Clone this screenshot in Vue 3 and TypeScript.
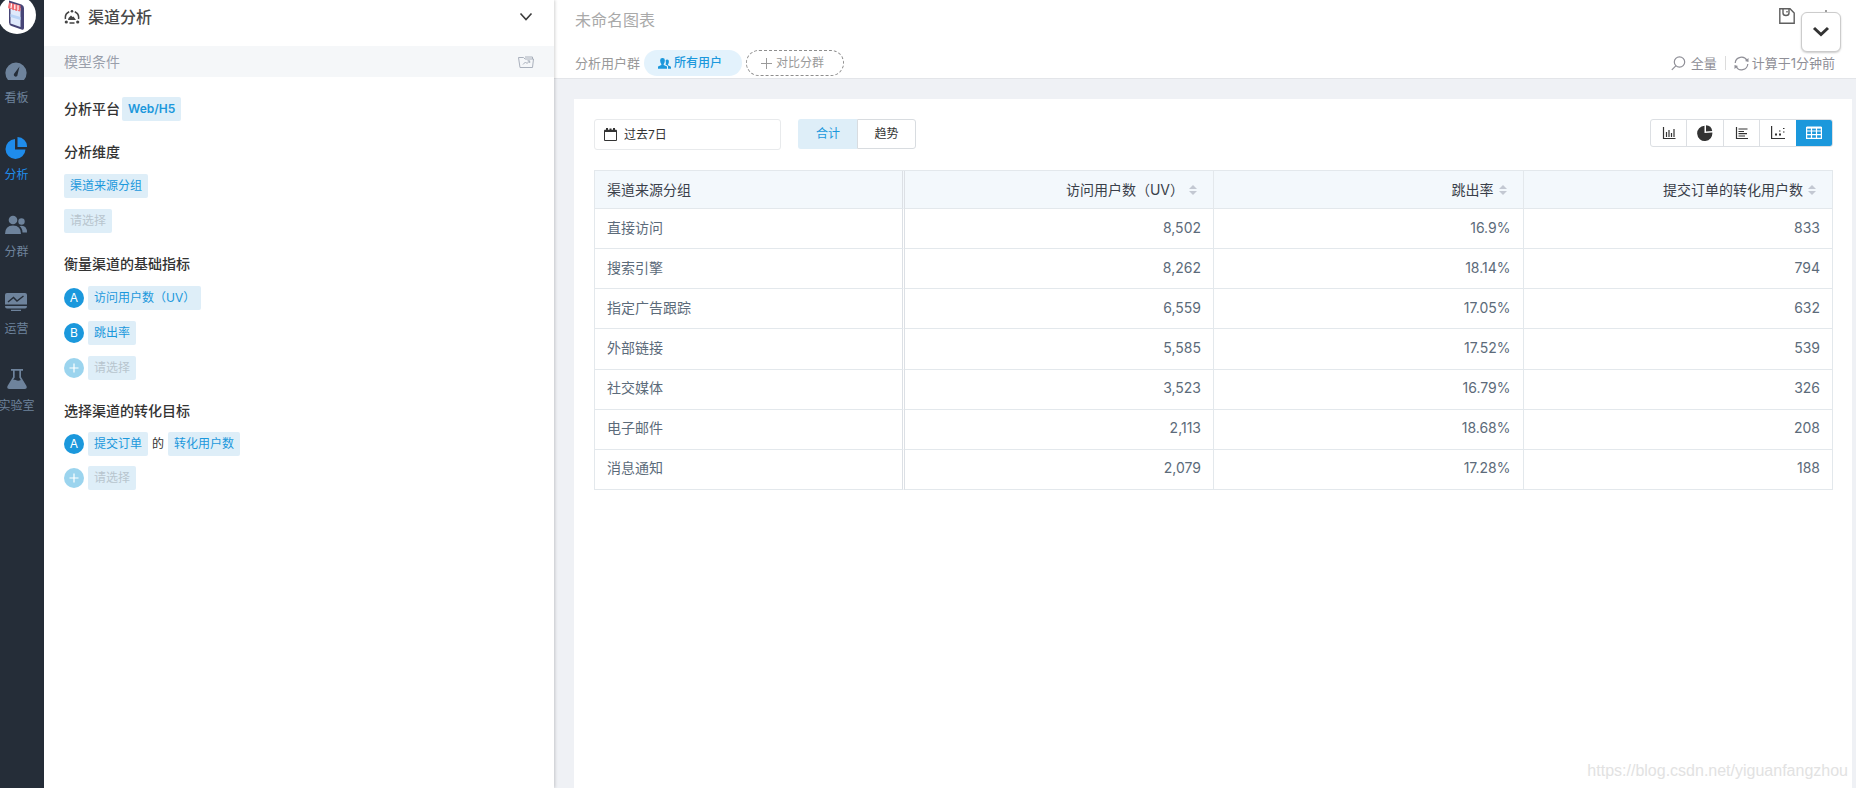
<script setup lang="ts">
import { ref } from 'vue'

type Chip = { text: string; muted?: boolean }
type Line = { badge?: string; add?: boolean; chips: Chip[] }
type Section = { title: string; lines: Line[] }

const navItems = [
  { key: 'board', label: '看板' },
  { key: 'analysis', label: '分析' },
  { key: 'groups', label: '分群' },
  { key: 'operate', label: '运营' },
  { key: 'lab', label: '实验室' },
]
const activeNav = ref('analysis')

const sections: Section[] = [
  {
    title: '分析维度',
    lines: [
      { chips: [{ text: '渠道来源分组' }] },
      { chips: [{ text: '请选择', muted: true }] },
    ],
  },
  {
    title: '衡量渠道的基础指标',
    lines: [
      { badge: 'A', chips: [{ text: '访问用户数（UV）' }] },
      { badge: 'B', chips: [{ text: '跳出率' }] },
      { add: true, chips: [{ text: '请选择', muted: true }] },
    ],
  },
  {
    title: '选择渠道的转化目标',
    lines: [
      { badge: 'A', chips: [{ text: '提交订单' }, { text: '转化用户数' }] },
      { add: true, chips: [{ text: '请选择', muted: true }] },
    ],
  },
]

const mode = ref<'total' | 'trend'>('total')
const chart = ref('table')
const charts = [
  { key: 'bar', label: '柱状图' },
  { key: 'pie', label: '饼图' },
  { key: 'hbar', label: '条形图' },
  { key: 'scatter', label: '散点图' },
  { key: 'table', label: '表格' },
]

const metrics = ['访问用户数（UV）', '跳出率', '提交订单的转化用户数']
const rows = [
  ['直接访问', '8,502', '16.9%', '833'],
  ['搜索引擎', '8,262', '18.14%', '794'],
  ['指定广告跟踪', '6,559', '17.05%', '632'],
  ['外部链接', '5,585', '17.52%', '539'],
  ['社交媒体', '3,523', '16.79%', '326'],
  ['电子邮件', '2,113', '18.68%', '208'],
  ['消息通知', '2,079', '17.28%', '188'],
]
</script>

<template>
  <div class="app">
    <nav class="rail">
      <a class="avatar" href="#" aria-label="首页">
        <svg width="38" height="38" viewBox="0 0 38 38">
          <circle cx="19" cy="19" r="19" fill="#fff" />
          <path d="M11 4.500 L23.500 8.500 Q26 9.500 26 12 V32 Q26 34.500 23.500 33.500 L13.500 30 Q11 29 11 26.500Z" fill="#474577" />
          <path d="M12.500 9 L22.500 12 V31 L12.500 27.500Z" fill="#dfe9fb" />
          <path d="M12.500 18 L22.500 21 V24 L12.500 21Z" fill="#b9d3f6" />
          <path d="M11 6.500 L22.500 9.500 V14.500 Q21 16.500 19.500 14 Q18 16 16.500 13.500 Q15 15.500 13.500 12.500 Q11.500 14 10 11.500Z" fill="#ef6a70" />
          <path d="M13.500 7.500 L13 12 M16.800 8.500 V13 M20 9.300 V14" stroke="#fff" stroke-width="1.200" />
        </svg>
      </a>
      <a
        v-for="n in navItems"
        :key="n.key"
        href="#"
        class="nav-item"
        :class="{ active: activeNav === n.key }"
        @click.prevent="activeNav = n.key"
      >
        <svg width="22" height="22" viewBox="0 0 22 22" fill="currentColor" aria-hidden="true">
          <template v-if="n.key === 'board'">
            <path d="M3 20 A10.600 10.600 0 1 1 19 20Z" />
            <path d="M14.500 6.500 L12.600 14.600 A1.900 1.900 0 1 1 9.300 13.500Z" fill="#252d38" />
          </template>
          <template v-else-if="n.key === 'analysis'">
            <path d="M10 2 V12.500 H20.500 A10 10 0 1 1 10 2Z" />
            <path d="M12.500 0 A9.500 9.500 0 0 1 22 10 H12.500Z" />
          </template>
          <template v-else-if="n.key === 'groups'">
            <circle cx="8" cy="6" r="4.300" />
            <path d="M0 20 Q0 11.500 8 11.500 Q16 11.500 16 20Z" />
            <circle cx="16.500" cy="7.500" r="3.200" />
            <path d="M14.500 12 Q22 10.500 22 18.500 H17.500 Q17.500 14.500 14.500 12Z" />
          </template>
          <template v-else-if="n.key === 'operate'">
            <path d="M2 2 H20 Q22 2 22 4 V13.500 H0 V4 Q0 2 2 2Z" />
            <path d="M3 11 L8.500 6.500 L12 10 L18.500 5" fill="none" stroke="#252d38" stroke-width="1.400" />
            <path d="M0 15 H22 Q22 17.500 20 17.500 H2 Q0 17.500 0 15Z M6 18.800 H16 V20 H6Z" />
          </template>
          <template v-else>
            <path d="M5 1 H17 V2.800 H15 V9 L20.500 18 Q21.500 21 18.500 21 H3.500 Q0.500 21 1.500 18 L7 9 V2.800 H5Z" />
            <path d="M8.700 2.800 H13.300 V9.500 L14.800 12 Q12 13.500 9.800 12 Q8.500 11.500 7.200 12 L8.700 9.500Z" fill="#252d38" />
          </template>
        </svg>
        <span>{{ n.label }}</span>
      </a>
    </nav>

    <aside class="panel">
      <header class="panel-head">
        <svg width="16" height="16" viewBox="0 0 16 16" aria-hidden="true">
          <path d="M1.500 10 A6.600 6.600 0 0 1 5.200 2.800 M10.800 2.800 A6.600 6.600 0 0 1 14.500 10 M5.500 14 H10.500" fill="none" stroke="#444" stroke-width="1.500" />
          <circle cx="8" cy="2.200" r="1.300" fill="#444" />
          <circle cx="2.300" cy="13" r="1.600" fill="#444" />
          <circle cx="13.700" cy="13" r="1.600" fill="#444" />
          <path d="M4 11 L4.500 9 L7 6.500 L8.500 8 L9.500 7.500 L12 11Z" fill="#444" />
        </svg>
        <h1>渠道分析</h1>
        <button class="plain" type="button" aria-label="收起">
          <svg width="14" height="10" viewBox="0 0 14 10"><path d="M1.500 1.500 L7 7.500 L12.500 1.500" fill="none" stroke="#3c3c3c" stroke-width="1.600" /></svg>
        </button>
      </header>
      <div class="subbar">
        <span>模型条件</span>
        <button class="plain" type="button" aria-label="保存模型">
          <svg width="16" height="12" viewBox="0 0 16 12" fill="none" stroke="#a9b0bc" stroke-width="1">
            <path d="M2 11.500 L0.500 1.500 H5.500 L7 3 H15.500 L14.500 11.500Z M7 1 H14.500 V3 M5 8.500 L7.500 6 L9 7.500 L11.500 5 M9.500 4.800 H11.700 V7" />
          </svg>
        </button>
      </div>
      <div class="conditions">
        <div class="platform">
          <h2>分析平台</h2>
          <button class="chip strong" type="button">Web/H5</button>
        </div>
        <section v-for="s in sections" :key="s.title" class="section">
          <h2>{{ s.title }}</h2>
          <div v-for="(l, i) in s.lines" :key="i" class="line">
            <span v-if="l.badge" class="badge">{{ l.badge }}</span>
            <button v-if="l.add" class="badge add" type="button" aria-label="添加">
              <svg width="10" height="10" viewBox="0 0 10 10"><path d="M5 0.500 V9.500 M0.500 5 H9.500" stroke="#fff" stroke-width="1.200" /></svg>
            </button>
            <template v-for="(c, j) in l.chips" :key="j">
              <span v-if="j > 0" class="of">的</span>
              <button class="chip" :class="{ muted: c.muted }" type="button">{{ c.text }}</button>
            </template>
          </div>
        </section>
      </div>
    </aside>

    <main class="main">
      <header class="top">
        <div class="top-row">
          <input class="name" type="text" placeholder="未命名图表" aria-label="图表名称" />
          <div class="tools">
            <button class="plain" type="button" aria-label="保存">
              <svg width="16" height="16" viewBox="0 0 16 16" fill="none" stroke="#5f5f5f" stroke-width="1.400">
                <path d="M0.800 0.800 H11 L15.200 5 V15.200 H0.800Z M4 1 V5 Q4 7.500 7 7.500 Q10 7.500 10 5 V1 M8 3 V4.500" />
              </svg>
            </button>
            <button class="plain download" type="button" aria-label="下载">
              <svg width="16" height="16" viewBox="0 0 16 16" fill="none" stroke="#5f5f5f" stroke-width="1.200">
                <path d="M8 0 V11 M4.500 8 L8 11.500 L11.500 8 M1.500 11 V15 H14.500 V11" />
              </svg>
            </button>
          </div>
        </div>
        <div class="top-row second">
          <span class="label">分析用户群</span>
          <button class="pill" type="button">
            <svg width="13" height="11" viewBox="0 0 13 11" fill="currentColor" aria-hidden="true">
              <path d="M4.500 0 A2.300 2.600 0 0 1 6.800 3 Q6.700 5 5.700 6 V7 L9 8.600 V10.800 H0 V8.600 L3.300 7 V6 Q2.300 5 2.200 3 A2.300 2.600 0 0 1 4.500 0Z" />
              <path d="M9.200 1.500 A1.800 2 0 0 1 10.900 3.700 Q10.800 5.500 10 6.500 V7.300 L13 8.800 V10.800 H10 V8 L7.500 6.600 Q8.300 5 7.600 2.500 Q8 1.500 9.200 1.500Z" />
            </svg>
            <span>所有用户</span>
          </button>
          <button class="pill dashed" type="button">
            <svg width="11" height="11" viewBox="0 0 11 11" aria-hidden="true"><path d="M5.500 0 V11 M0 5.500 H11" stroke="currentColor" /></svg>
            <span>对比分群</span>
          </button>
          <div class="status">
            <button class="plain" type="button">
              <svg width="15" height="15" viewBox="0 0 15 15" fill="none" stroke="#8f8f97" stroke-width="1.200" aria-hidden="true">
                <circle cx="8.500" cy="6" r="5.200" /><path d="M4.800 9.800 L0.800 13.800" />
              </svg>
              <span>全量</span>
            </button>
            <i class="divider"></i>
            <button class="plain tight" type="button">
              <svg width="15" height="15" viewBox="0 0 15 15" fill="none" stroke="#8f8f97" stroke-width="1.200" aria-hidden="true">
                <path d="M1.200 7 A6.300 6.300 0 0 1 13 4.500 M13.800 8 A6.300 6.300 0 0 1 2 10.500" />
                <path d="M14.500 2 V6 L11 5Z M0.500 13 V9 L4 10Z" fill="#8f8f97" stroke="none" />
              </svg>
              <span>计算于1分钟前</span>
            </button>
          </div>
        </div>
      </header>

      <div class="body">
        <section class="card">
          <div class="controls">
            <button class="date" type="button">
              <svg width="13" height="13" viewBox="0 0 13 13" aria-hidden="true">
                <path d="M0.500 2.500 H12.500 V12.500 H0.500Z" fill="none" stroke="#333" />
                <path d="M0.500 1.800 H2 V0 H4 V1.800 H5.500 V0.500 H7.500 V1.800 H9 V0 H11 V1.800 H12.500 V4 H0.500Z" fill="#333" />
              </svg>
              <span>过去7日</span>
            </button>
            <div class="modes">
              <button type="button" :class="{ on: mode === 'total' }" @click="mode = 'total'">合计</button>
              <button type="button" :class="{ on: mode === 'trend' }" @click="mode = 'trend'">趋势</button>
            </div>
            <div class="charts">
              <button
                v-for="c in charts"
                :key="c.key"
                type="button"
                :aria-label="c.label"
                :class="{ on: chart === c.key }"
                @click="chart = c.key"
              >
                <svg width="16" height="16" viewBox="0 0 16 16" fill="none" stroke="currentColor" stroke-width="1.200">
                  <path v-if="c.key === 'bar'" d="M2.500 2 V13.500 H14.500 M5.500 7 V12 M8 5 V12 M10.500 8 V12 M13 4 V12" />
                  <g v-else-if="c.key === 'pie'" fill="currentColor" stroke="none">
                    <path d="M7.500 0.800 V8 L15.300 7.500 A7.600 7.600 0 1 1 7.500 0.800Z" /><path d="M9 0.300 A6.700 6.700 0 0 1 15.200 6 L9 6.500Z" />
                  </g>
                  <path v-else-if="c.key === 'hbar'" d="M2.500 2 V13.500 H14 M4.500 4 H13.500 M4.500 6.500 H10 M4.500 8.700 H13 M4.500 11 H11" />
                  <g v-else-if="c.key === 'scatter'">
                    <path d="M1.600 1 V13.500 H15" />
                    <path d="M5 9 H7 M5 10 H7 M9 6 H10.500 M9 9 H11 M9 10 H11 M13 3.500 H14.500 M13 7 H14.500" />
                  </g>
                  <g v-else>
                    <path d="M0.600 2.600 H15.400 V13.400 H0.600Z M0.600 6 H15.400 M0.600 9.700 H15.400 M5.500 3 V13 M10.500 3 V13" />
                    <path d="M0.600 2.600 H15.400" stroke-width="2" />
                  </g>
                </svg>
              </button>
            </div>
          </div>

          <table>
            <thead>
              <tr>
                <th scope="col">渠道来源分组</th>
                <th v-for="m in metrics" :key="m" scope="col">
                  <button class="sort" type="button">
                    <span>{{ m }}</span>
                    <svg width="8" height="10" viewBox="0 0 8 10" fill="#c3c8d2" aria-hidden="true"><path d="M4 0 L8 4 H0Z M0 6 H8 L4 10Z" /></svg>
                  </button>
                </th>
              </tr>
            </thead>
            <tbody>
              <tr v-for="r in rows" :key="r[0]">
                <td v-for="(v, i) in r" :key="i">{{ v }}</td>
              </tr>
            </tbody>
          </table>
        </section>
      </div>
    </main>

    <button class="float" type="button" aria-label="展开">
      <svg width="18" height="12" viewBox="0 0 18 12"><path d="M2 2 L9 8.500 L16 2" fill="none" stroke="#333" stroke-width="3" /></svg>
    </button>
    <div class="mark">https://blog.csdn.net/yiguanfangzhou</div>
  </div>
</template>

<style>
body {
  margin: 0;
}
</style>

<style scoped>
.app {
  position: relative;
  display: flex;
  min-height: 100vh;
  overflow: hidden;
  background: #eff1f5;
  color: #333;
  font-family: Inter, 'Noto Sans CJK SC', sans-serif;
  font-size: 12px;
  line-height: 18px;
}
.app *,
.app *::before {
  box-sizing: border-box;
}
button,
input {
  margin: 0;
  padding: 0;
  border: 0;
  background: none;
  color: inherit;
  font: inherit;
}
button {
  cursor: pointer;
  white-space: nowrap;
}
svg {
  display: block;
  flex: none;
}
h1,
h2 {
  margin: 0;
}
.plain {
  display: flex;
  align-items: center;
  gap: 5px;
}
.plain.tight {
  gap: 3px;
}

.rail {
  flex: none;
  display: flex;
  flex-direction: column;
  align-items: center;
  gap: 30px;
  width: 44px;
  padding-right: 11px;
  background: #252d38;
}
.avatar {
  margin-top: -4px;
  margin-bottom: -4px;
}
.nav-item {
  display: flex;
  flex-direction: column;
  align-items: center;
  gap: 7px;
  color: #6e839c;
  text-decoration: none;
  white-space: nowrap;
}
.nav-item.active {
  color: #1f8ceb;
}

.panel {
  position: relative;
  z-index: 1;
  flex: none;
  width: 510px;
  background: #fff;
  box-shadow: 1px 0 3px rgba(0, 0, 0, 0.18);
}
.panel-head {
  display: flex;
  align-items: center;
  gap: 8px;
  height: 46px;
  padding: 0 21px 12px 20px;
}
.panel-head h1 {
  flex: 1;
  color: #484848;
  font-size: 16px;
  font-weight: 500;
  line-height: 24px;
}
.subbar {
  display: flex;
  align-items: center;
  justify-content: space-between;
  height: 31px;
  padding: 0 20px;
  background: #f5f7f9;
  color: #9a9fab;
  font-size: 14px;
}
.conditions {
  display: flex;
  flex-direction: column;
  gap: 21px;
  padding: 20px;
}
.conditions h2 {
  font-size: 14px;
  font-weight: 500;
  line-height: 20px;
}
.platform {
  display: flex;
  align-items: center;
  gap: 2px;
}
.section {
  display: flex;
  flex-direction: column;
  gap: 11px;
}
.section h2 {
  margin-bottom: 1px;
}
.section:last-child {
  gap: 10px;
}
.line {
  display: flex;
  align-items: center;
  gap: 4px;
}
.chip {
  height: 24px;
  padding: 0 6px;
  border-radius: 2px;
  background: #deeef8;
  color: #1b98dc;
}
.chip.strong {
  font-weight: 600;
}
.chip.muted {
  color: #b8c5ce;
}
.badge {
  display: flex;
  align-items: center;
  justify-content: center;
  width: 20px;
  height: 20px;
  border-radius: 50%;
  background: #1b98dc;
  color: #fff;
}
.badge.add {
  background: #9bd4ee;
}

.main {
  flex: 1;
  min-width: 0;
  display: flex;
  flex-direction: column;
}
.top {
  display: flex;
  flex-direction: column;
  gap: 15px;
  height: 79px;
  padding: 5px 21px 0 21px;
  border-bottom: 1px solid #e3e5e9;
  background: #fff;
}
.top-row {
  display: flex;
  align-items: center;
  height: 30px;
}
.second {
  height: 26px;
  gap: 4px;
}
.name {
  flex: 1;
  min-width: 0;
  color: #555;
  font-size: 16px;
  line-height: 24px;
  outline: none;
}
.name::placeholder {
  color: #a9a9a9;
  opacity: 1;
}
.tools {
  display: flex;
  align-items: center;
  gap: 23px;
  padding-bottom: 8px;
}
.download {
  padding-top: 4px;
  padding-right: 1px;
}
.label {
  color: #999;
  font-size: 13px;
}
.pill {
  display: flex;
  align-items: center;
  gap: 3px;
  height: 26px;
  width: 98px;
  padding: 0 14px;
  border-radius: 13px;
  background: #e3f2fc;
  color: #1b98dc;
  font-weight: 500;
}
.pill.dashed {
  gap: 4px;
  border: 1px dashed #8e8e8e;
  background: #fff;
  color: #9a9a9a;
  font-weight: 400;
}
.status {
  flex: 1;
  display: flex;
  align-items: center;
  justify-content: flex-end;
  gap: 8px;
  color: #8f8f97;
  font-size: 13px;
}
.divider {
  width: 1px;
  height: 14px;
  background: #dcdcdc;
}

.body {
  flex: 1;
  display: flex;
  padding: 20px 4px 0 20px;
}
.card {
  flex: 1;
  min-width: 0;
  padding: 20px 19px 20px 20px;
  background: #fff;
}
.controls {
  display: flex;
  align-items: flex-start;
  height: 51px;
}
.date {
  display: flex;
  align-items: center;
  gap: 7px;
  width: 187px;
  height: 31px;
  margin-right: 17px;
  padding: 0 9px;
  border: 1px solid #e8eaec;
  border-radius: 3px;
}
.modes {
  display: flex;
}
.modes button {
  width: 59px;
  height: 30px;
  border: 1px solid #d8dce0;
  border-radius: 0 3px 3px 0;
}
.modes button:first-child {
  border-radius: 3px 0 0 3px;
  border-right: 0;
}
.modes .on {
  border-color: #deeef8;
  background: #deeef8;
  color: #1b98dc;
}
.charts {
  display: flex;
  width: 183px;
  margin-left: auto;
  border: 1px solid #dcdfe3;
  border-radius: 3px;
  overflow: hidden;
}
.charts button {
  flex: 1;
  display: flex;
  align-items: center;
  justify-content: center;
  height: 26px;
}
.charts button + button {
  border-left: 1px solid #dcdfe3;
}
.charts button.on {
  border-color: #1b98dc;
  background: #1b98dc;
  color: #fff;
}

table {
  width: 100%;
  height: 320px;
  table-layout: fixed;
  border-collapse: separate;
  border-spacing: 0;
  border-top: 1px solid #e3e8ec;
  border-left: 1px solid #e3e8ec;
  font-size: 14px;
  line-height: 20px;
}
th,
td {
  height: 40px;
  padding: 0 12px 2px;
  border-right: 1px solid #e3e8ec;
  border-bottom: 1px solid #e3e8ec;
  color: #5c6b7a;
  text-align: right;
}
th {
  height: 38px;
  background: #f3f8fc;
  color: #3a3f4a;
  font-weight: 400;
  padding-bottom: 0;
}
th:first-child,
td:first-child {
  border-right: 3px double #dce0e5;
  text-align: left;
}
.sort {
  display: inline-flex;
  align-items: center;
  gap: 5px;
  padding-right: 4px;
}

.float {
  position: absolute;
  z-index: 2;
  top: 12px;
  right: 15px;
  display: flex;
  align-items: center;
  justify-content: center;
  width: 40px;
  height: 40px;
  border: 1px solid #ccc;
  border-radius: 6px;
  background: #fff;
  box-shadow: 0 1px 2px rgba(0, 0, 0, 0.2);
}
.mark {
  position: absolute;
  right: 8px;
  bottom: 7px;
  color: #e2e2e2;
  font-family: 'Liberation Sans', sans-serif;
  font-size: 16px;
  line-height: 20px;
}
</style>
